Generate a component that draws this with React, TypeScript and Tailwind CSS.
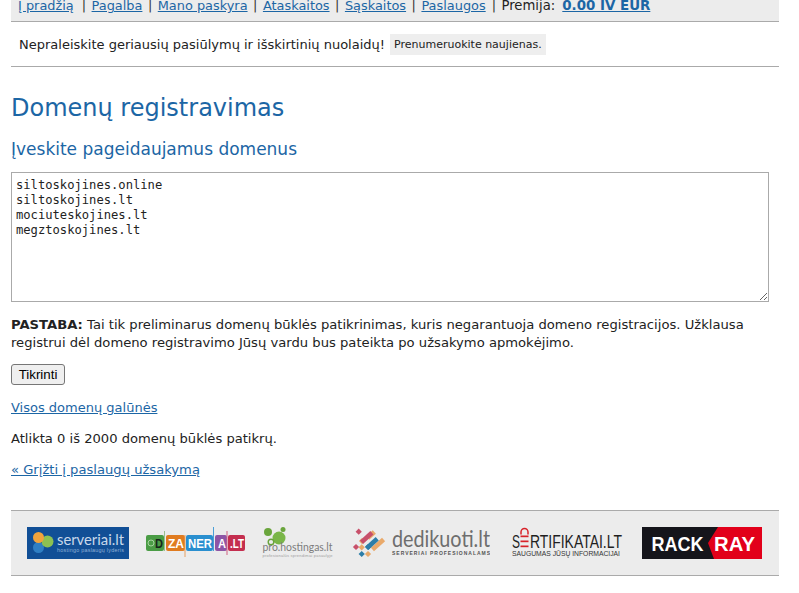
const F = "font-['DejaVu_Sans',Verdana,sans-serif]";
const link = "text-[#1c66a5] underline";

function Sep() {
  return <span className="mx-[5.5px] text-[#333]">|</span>;
}

function Serveriai() {
  return (
    <svg width="102" height="32" viewBox="0 0 102 32" className="shrink-0">
      <rect width="102" height="32" fill="#114f96" />
      <circle cx="11.5" cy="20.5" r="5.5" fill="#2f7fc4" />
      <circle cx="20.5" cy="14.5" r="6" fill="#8cc152" />
      <circle cx="11.5" cy="10.5" r="5.5" fill="#f0a33c" />
      <text x="30" y="18" fontSize="15" fill="#c9d9eb" fontFamily="Lato" textLength="67" lengthAdjust="spacingAndGlyphs">serveriai.lt</text>
      <text x="30" y="25" fontSize="5.4" fill="#8fb0d6" fontFamily="Liberation Sans" textLength="67">hostingo paslaugų lyderis</text>
    </svg>
  );
}

function Dizaneria() {
  const boxes: [number, number, string, string, number][] = [
    [0, 18, "#4a9c45", "D", 8],
    [20, 19, "#e07b1f", "ZA", 16],
    [40, 27, "#2a8fcf", "NER", 24],
    [69, 12, "#8e55a5", "A", 8],
    [82, 17, "#c42e4f", ".LT", 14],
  ];
  return (
    <svg width="99" height="32" viewBox="0 0 99 32" className="shrink-0">
      {boxes.map(([x, w, c, t, l], i) => (
        <g key={i}>
          <rect x={x} y="8" width={w} height="16" rx="2" fill={c} />
          <text x={x + w - l - 1} y="20.5" fontSize="12.5" fontWeight="700" fill={i === 0 ? "#17261a" : "#fff"} fontFamily="Liberation Sans" textLength={l} lengthAdjust="spacingAndGlyphs">{t}</text>
        </g>
      ))}
      <circle cx="5" cy="16" r="3" fill="none" stroke="#bfe0b5" strokeWidth="0.8" />
      <line x1="18.5" y1="4" x2="18.5" y2="24" stroke="#9bbf8f" />
      <line x1="39" y1="8" x2="39" y2="30" stroke="#e8a060" />
      <line x1="67.5" y1="0" x2="67.5" y2="24" stroke="#4a9fd8" />
      <line x1="81" y1="4" x2="81" y2="28" stroke="#d06080" />
    </svg>
  );
}

function ProHostingas() {
  return (
    <svg width="72" height="32" viewBox="0 0 72 32" className="shrink-0">
      <circle cx="6" cy="5" r="4" fill="#6aa53c" />
      <circle cx="21" cy="2.5" r="2.5" fill="#6aa53c" />
      <circle cx="17" cy="11" r="6.5" fill="#7ab648" />
      <circle cx="9" cy="15" r="2.8" fill="#ececec" stroke="#6aa53c" strokeWidth="1.4" />
      <text x="0.5" y="24" fontSize="11.5" fill="#7c7c7c" fontFamily="Lato" textLength="70" lengthAdjust="spacingAndGlyphs">pro.hostingas.lt</text>
      <text x="0.5" y="30" fontSize="4" fill="#a0a0a0" fontFamily="Liberation Sans" textLength="70">profesionalūs sprendimai pasaulyje</text>
    </svg>
  );
}

function Dedikuoti() {
  const d: [number, number, string][] = [
    [6.7, 4.7, "#c8506a"], [4, 20, "#c8506a"], [10, 14, "#e9a96a"], [9.7, 20.3, "#e9a96a"],
    [16, 20, "#2d7ea8"], [9.7, 27, "#2d7ea8"], [16, 27, "#e9a96a"],
  ];
  const bars: [number, number, number, string][] = [
    [19, 8, 9, "#e9a96a"], [14.7, 10.5, 14, "#c8506a"], [26, 17.5, 15, "#e9a96a"], [20, 16.5, 14, "#2d7ea8"],
  ];
  return (
    <svg width="138" height="32" viewBox="0 0 138 32" className="shrink-0">
      {d.map(([x, y, c], i) => (
        <rect key={i} x={x - 2.2} y={y - 2.2} width="4.4" height="4.4" fill={c} transform={`rotate(45 ${x} ${y})`} />
      ))}
      {bars.map(([x, y, w, c], i) => (
        <rect key={i} x={x - w / 2} y={y - 2.3} width={w} height="4.6" fill={c} transform={`rotate(-42 ${x} ${y})`} />
      ))}
      <text x="40" y="20" fontSize="23" fill="#6e6e6e" fontFamily="Lato" textLength="98" lengthAdjust="spacingAndGlyphs">dedikuoti.lt</text>
      <text x="40" y="28" fontSize="5" fontWeight="700" fill="#555" fontFamily="Liberation Sans" textLength="98">SERVERIAI PROFESIONALAMS</text>
    </svg>
  );
}

function Sertifikatai() {
  return (
    <svg width="112" height="32" viewBox="0 0 112 32" className="shrink-0">
      <path d="M10 7.5V5a3.5 3.5 0 0 1 7 0v2.5" fill="none" stroke="#d8232a" strokeWidth="1.5" />
      <text x="1" y="21" fontSize="18" fill="#1f1f1f" fontFamily="Liberation Sans" textLength="8" lengthAdjust="spacingAndGlyphs">S</text>
      <rect x="9.5" y="8.5" width="8" height="1.7" fill="#d8232a" />
      <rect x="9.5" y="13.5" width="8" height="1.7" fill="#d8232a" />
      <rect x="9.5" y="18.5" width="8" height="1.7" fill="#d8232a" />
      <text x="19" y="21" fontSize="18" fill="#1f1f1f" fontFamily="Liberation Sans" textLength="92" lengthAdjust="spacingAndGlyphs">RTIFIKATAI.LT</text>
      <text x="1" y="29" fontSize="7.7" fill="#333" fontFamily="Liberation Sans" textLength="108" lengthAdjust="spacingAndGlyphs">SAUGUMAS JŪSŲ INFORMACIJAI</text>
    </svg>
  );
}

function RackRay() {
  return (
    <svg width="120" height="32" viewBox="0 0 120 32" className="shrink-0">
      <rect width="120" height="32" fill="#e2001a" />
      <path d="M0 0H76L66 16L72 32H0Z" fill="#15151b" />
      <text x="9.5" y="23.5" fontSize="21" fontWeight="700" fill="#fff" fontFamily="Liberation Sans" textLength="52" lengthAdjust="spacingAndGlyphs">RACK</text>
      <text x="72" y="23.5" fontSize="21" fontWeight="700" fill="#fff" fontFamily="Liberation Sans" textLength="41" lengthAdjust="spacingAndGlyphs">RAY</text>
    </svg>
  );
}

export default function App() {
  return (
    <div className={`${F} w-[799px] h-[593px] overflow-hidden bg-white px-[11px] text-[13px] leading-[15px] text-[#222]`}>
      <div className="w-[768px]">
        <div className="h-[23px] bg-[#ececec] border-b border-[#aaa] pl-[7px] text-[12.9px] leading-[13px] whitespace-nowrap">
          <div className="-mt-px">
            <a className={`${link} mr-[2.5px]`}>Į pradžią</a><Sep />
            <a className={link}>Pagalba</a><Sep />
            <a className={link}>Mano paskyra</a><Sep />
            <a className={link}>Ataskaitos</a><Sep />
            <a className={link}>Sąskaitos</a><Sep />
            <a className={`${link} mr-[0.5px]`}>Paslaugos</a><Sep />
            <span className="text-[13.2px]">Premija:</span> <a className={`${link} ml-[3px] font-bold text-[13.4px]`}>0.00 IV EUR</a>
          </div>
        </div>
        <div className="h-[45px] border-b border-[#aaa] pl-[8px] flex items-center">
          <span>Nepraleiskite geriausių pasiūlymų ir išskirtinių nuolaidų!</span>
          <span className="ml-[5px] bg-[#eee] px-[4px] py-[3px] text-[11px] leading-[15px]">Prenumeruokite naujienas.</span>
        </div>
        <h1 className="mt-[27px] text-[24px] leading-[28px] font-normal text-[#1c66a5]">Domenų registravimas</h1>
        <h2 className="mt-[17px] text-[17px] leading-[20px] font-normal text-[#1c66a5]">Įveskite pageidaujamus domenus</h2>
        <textarea
          readOnly
          className="mt-[13px] block w-[758px] h-[130px] border border-[#aaa] px-[4px] py-[5px] font-['DejaVu_Sans_Mono',monospace] text-[12.15px] leading-[15px] text-[#222] resize-y outline-none"
          defaultValue={"siltoskojines.online\nsiltoskojines.lt\nmociuteskojines.lt\nmegztoskojines.lt"}
        />
        <p className="mt-[14px] text-[13.15px] leading-[18px]"><b>PASTABA:</b> Tai tik preliminarus domenų būklės patikrinimas, kuris negarantuoja domeno registracijos. Užklausa registrui dėl domeno registravimo Jūsų vardu bus pateikta po užsakymo apmokėjimo.</p>
        <button className="mt-[12px] block h-[21px] w-[54px] rounded-[3px] border border-[#767676] bg-[#efefef] font-['Liberation_Sans',sans-serif] text-[13.33px] leading-[15px] text-black">Tikrinti</button>
        <p className="mt-[15px]"><a className={link}>Visos domenų galūnės</a></p>
        <p className="mt-[16px] text-[13.1px]">Atlikta 0 iš 2000 domenų būklės patikrų.</p>
        <p className="mt-[16px] text-[13.14px]"><a className={link}>« Grįžti į paslaugų užsakymą</a></p>
        <div className="mt-[33px] h-[66px] bg-[#ececec] border-y border-[#aaa] pl-[16px] flex items-center">
          <Serveriai />
          <div className="ml-[17px] shrink-0"><Dizaneria /></div>
          <div className="ml-[17px] shrink-0"><ProHostingas /></div>
          <div className="ml-[18px] shrink-0"><Dedikuoti /></div>
          <div className="ml-[21px] shrink-0"><Sertifikatai /></div>
          <div className="ml-[19px] shrink-0"><RackRay /></div>
        </div>
      </div>
    </div>
  );
}
